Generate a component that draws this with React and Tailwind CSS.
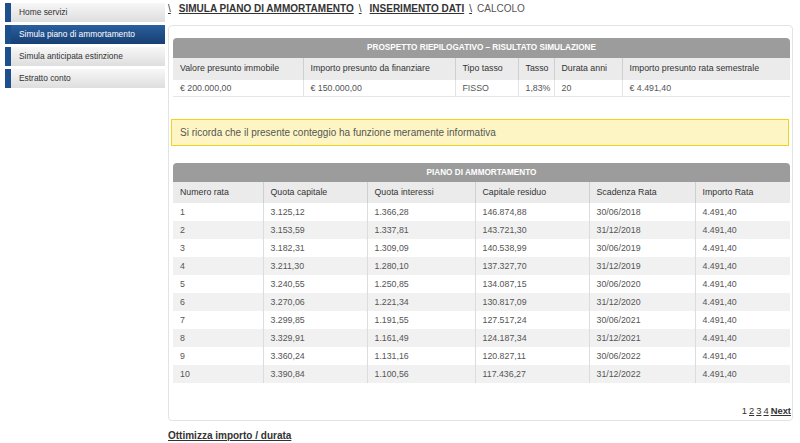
import React from "react";

const menu = [
  { label: "Home servizi" },
  { label: "Simula piano di ammortamento", active: true },
  { label: "Simula anticipata estinzione" },
  { label: "Estratto conto" },
];

const rows = [
  ["1", "3.125,12", "1.366,28", "146.874,88", "30/06/2018", "4.491,40"],
  ["2", "3.153,59", "1.337,81", "143.721,30", "31/12/2018", "4.491,40"],
  ["3", "3.182,31", "1.309,09", "140.538,99", "30/06/2019", "4.491,40"],
  ["4", "3.211,30", "1.280,10", "137.327,70", "31/12/2019", "4.491,40"],
  ["5", "3.240,55", "1.250,85", "134.087,15", "30/06/2020", "4.491,40"],
  ["6", "3.270,06", "1.221,34", "130.817,09", "31/12/2020", "4.491,40"],
  ["7", "3.299,85", "1.191,55", "127.517,24", "30/06/2021", "4.491,40"],
  ["8", "3.329,91", "1.161,49", "124.187,34", "31/12/2021", "4.491,40"],
  ["9", "3.360,24", "1.131,16", "120.827,11", "30/06/2022", "4.491,40"],
  ["10", "3.390,84", "1.100,56", "117.436,27", "31/12/2022", "4.491,40"],
];

const App = () => {
  return (
    <div className="flex w-[800px] h-[443px] overflow-hidden bg-white text-[#444]" style={{ fontFamily: '"Liberation Sans", Arial, sans-serif' }}>
      {/* sidebar */}
      <div className="w-[160px] ml-[5px] mt-[3px] flex flex-col gap-[3px] shrink-0">
        {menu.map((m) => (
          <div key={m.label} className="flex h-[19px]">
            <div className="w-[6px] bg-[#1d4f8c]" />
            <div
              className={
                m.active
                  ? "flex-1 flex items-center pl-[8px] text-[8.4px] text-white bg-gradient-to-b from-[#2a5f9e] to-[#173f73]"
                  : "flex-1 flex items-center pl-[8px] text-[8.4px] text-[#333] bg-gradient-to-b from-[#f7f7f7] to-[#dedede]"
              }
            >
              {m.label}
            </div>
          </div>
        ))}
      </div>

      {/* main */}
      <div className="ml-[3px] w-[625px] flex flex-col">
        <div className="h-[17px] flex items-center text-[10px] text-[#333] whitespace-nowrap">
          <span className="underline">\</span>
          <span className="font-bold underline ml-[8px]">SIMULA PIANO DI AMMORTAMENTO</span>
          <span className="underline ml-[5px]">\</span>
          <span className="font-bold underline ml-[8px]">INSERIMENTO DATI</span>
          <span className="underline ml-[5px]">\</span>
          <span className="ml-[5px] text-[#555]">CALCOLO</span>
        </div>

        <div className="mt-[8px] h-[398px] border border-[#e3e3e3] rounded-[4px] pl-[4px] pr-[2px] pt-[12px] flex flex-col">
          {/* summary */}
          <div className="rounded-t-[4px] overflow-hidden">
            <div className="h-[20px] bg-[#9c9c9c] flex items-center justify-center text-white font-bold text-[8.2px]">
              PROSPETTO RIEPILOGATIVO – RISULTATO SIMULAZIONE
            </div>
            <table className="w-[618px] table-fixed border-collapse text-[8.8px]">
              <colgroup>
                <col className="w-[130px]" />
                <col className="w-[152px]" />
                <col className="w-[63px]" />
                <col className="w-[36px]" />
                <col className="w-[68px]" />
                <col className="w-[169px]" />
              </colgroup>
              <thead>
                <tr className="h-[22px] bg-[#ebebeb] text-[#333]">
                  {["Valore presunto immobile", "Importo presunto da finanziare", "Tipo tasso", "Tasso", "Durata anni", "Importo presunto rata semestrale"].map((h, i) => (
                    <th key={h} className={"font-normal text-left px-[7px] whitespace-nowrap" + (i > 0 ? " border-l border-[#cfcfcf]" : "")}>{h}</th>
                  ))}
                </tr>
              </thead>
              <tbody>
                <tr className="h-[17px] bg-white text-[#555] border-b border-[#e6e6e6]">
                  {["€ 200.000,00", "€ 150.000,00", "FISSO", "1,83%", "20", "€ 4.491,40"].map((c, i) => (
                    <td key={i} className={"px-[7px] whitespace-nowrap" + (i > 0 ? " border-l border-[#e3e3e3]" : "")}>{c}</td>
                  ))}
                </tr>
              </tbody>
            </table>
          </div>

          {/* note */}
          <div className="mt-[22px] -ml-[2px] w-[618px] h-[27px] border border-[#f2d21a] bg-[#fdf6c4] flex items-center pl-[8px] text-[10px] text-[#555]">
            Si ricorda che il presente conteggio ha funzione meramente informativa
          </div>

          {/* amortization */}
          <div className="mt-[17px] rounded-t-[4px] overflow-hidden">
            <div className="h-[19px] bg-[#9c9c9c] flex items-center justify-center text-white font-bold text-[8.2px]">
              PIANO DI AMMORTAMENTO
            </div>
            <table className="w-[618px] table-fixed border-collapse text-[8.8px]">
              <colgroup>
                <col className="w-[90px]" />
                <col className="w-[104px]" />
                <col className="w-[108px]" />
                <col className="w-[114px]" />
                <col className="w-[106px]" />
                <col className="w-[96px]" />
              </colgroup>
              <thead>
                <tr className="h-[21px] bg-[#ebebeb] text-[#333]">
                  {["Numero rata", "Quota capitale", "Quota interessi", "Capitale residuo", "Scadenza Rata", "Importo Rata"].map((h, i) => (
                    <th key={h} className={"font-normal text-left px-[7px] whitespace-nowrap" + (i > 0 ? " border-l border-[#cfcfcf]" : "")}>{h}</th>
                  ))}
                </tr>
              </thead>
              <tbody>
                {rows.map((r, ri) => (
                  <tr key={ri} className={"h-[18px] text-[#555] " + (ri % 2 === 0 ? "bg-white" : "bg-[#f1f1f1]")}>
                    {r.map((c, i) => (
                      <td key={i} className={"px-[7px] whitespace-nowrap" + (i > 0 ? " border-l border-[#dcdcdc]" : "")}>{c}</td>
                    ))}
                  </tr>
                ))}
              </tbody>
            </table>
          </div>

          <div className="mt-[21px] w-[618px] flex justify-end gap-[2px] text-[9.4px] text-[#333]">
            <span>1</span>
            <span className="underline">2</span>
            <span className="underline">3</span>
            <span className="underline">4</span>
            <span className="underline font-bold">Next</span>
          </div>
        </div>

        <div className="mt-[7px] text-[10px] font-bold underline text-[#333]">Ottimizza importo / durata</div>
      </div>
    </div>
  );
};

export default App;
